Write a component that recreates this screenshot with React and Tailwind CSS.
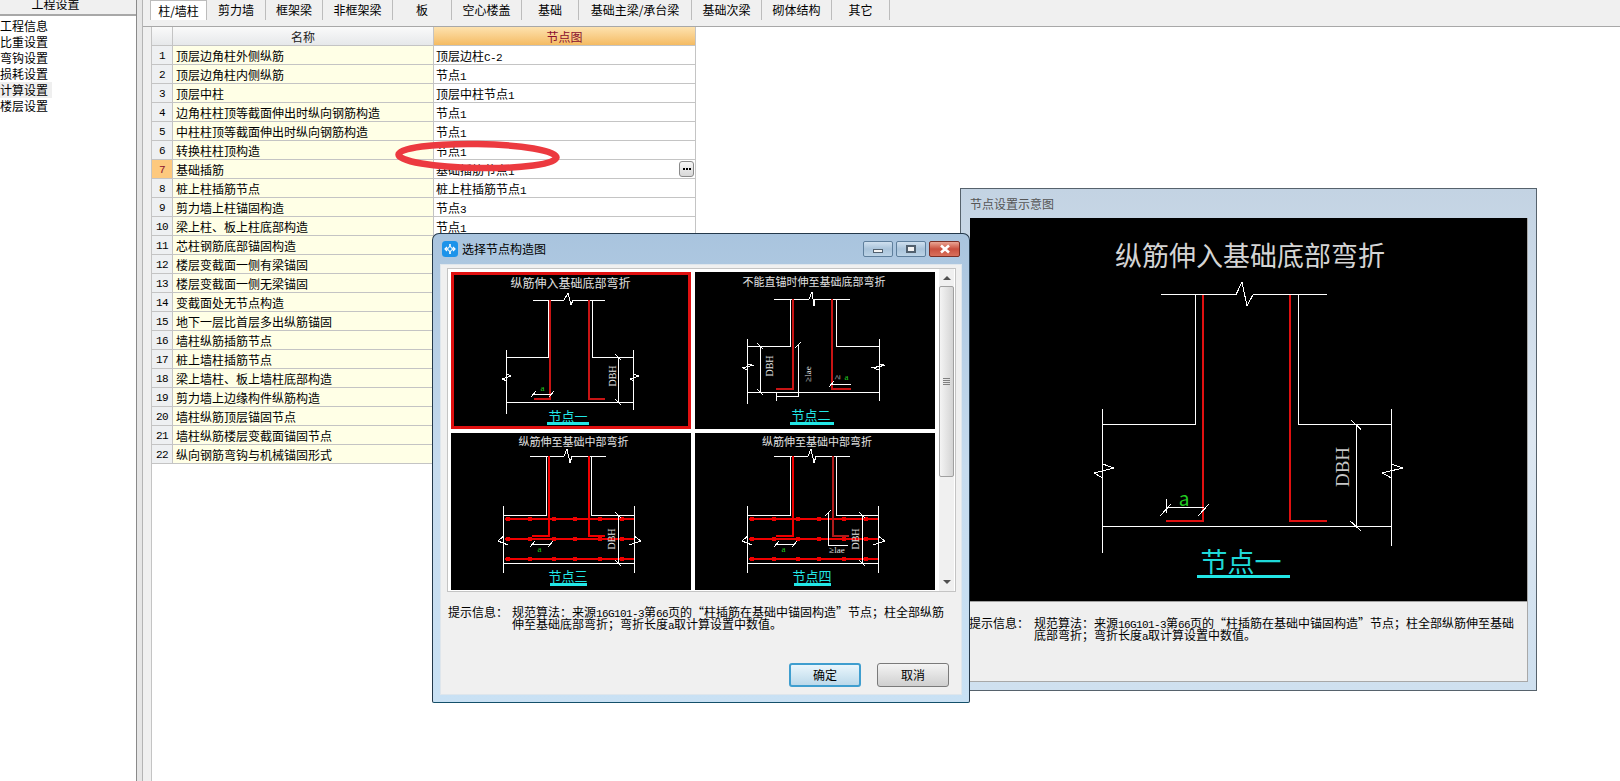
import React from 'react';

// ─── Table data ───────────────────────────────────────────────────────────────

const NAV = ['工程信息', '比重设置', '弯钩设置', '损耗设置', '计算设置', '楼层设置'];

const TABS = [
  ['柱/墙柱', 'w-[57px]'],
  ['剪力墙', 'w-[59px]'],
  ['框架梁', 'w-[57px]'],
  ['非框架梁', 'w-[70px]'],
  ['板', 'w-[59px]'],
  ['空心楼盖', 'w-[70px]'],
  ['基础', 'w-[57px]'],
  ['基础主梁/承台梁', 'w-[113px]'],
  ['基础次梁', 'w-[70px]'],
  ['砌体结构', 'w-[70px]'],
  ['其它', 'w-[58px]'],
];

const ROWS = [
  ['顶层边角柱外侧纵筋', '顶层边柱', 'C-2'],
  ['顶层边角柱内侧纵筋', '节点', '1'],
  ['顶层中柱', '顶层中柱节点', '1'],
  ['边角柱柱顶等截面伸出时纵向钢筋构造', '节点', '1'],
  ['中柱柱顶等截面伸出时纵向钢筋构造', '节点', '1'],
  ['转换柱柱顶构造', '节点', '1'],
  ['基础插筋', '基础插筋节点', '1'],
  ['桩上柱插筋节点', '桩上柱插筋节点', '1'],
  ['剪力墙上柱锚固构造', '节点', '3'],
  ['梁上柱、板上柱底部构造', '节点', '1'],
  ['芯柱钢筋底部锚固构造'],
  ['楼层变截面一侧有梁锚固'],
  ['楼层变截面一侧无梁锚固'],
  ['变截面处无节点构造'],
  ['地下一层比首层多出纵筋锚固'],
  ['墙柱纵筋插筋节点'],
  ['桩上墙柱插筋节点'],
  ['梁上墙柱、板上墙柱底部构造'],
  ['剪力墙上边缘构件纵筋构造'],
  ['墙柱纵筋顶层锚固节点'],
  ['墙柱纵筋楼层变截面锚固节点'],
  ['纵向钢筋弯钩与机械锚固形式'],
];

const SELECTED_ROW = 7;

// ─── Small helpers ────────────────────────────────────────────────────────────

function Lat({ children }) {
  return <span className="font-['Liberation_Mono',monospace] text-[11px] tracking-[-0.6px]">{children}</span>;
}

function L({ p, c = '#fff', w = 1 }) {
  return <polyline points={p} fill="none" stroke={c} strokeWidth={w} />;
}

function T({ x, y, size, children, c = '#e0e0e0', rotate, serif }) {
  return (
    <text
      x={x}
      y={y}
      fontSize={size}
      fill={c}
      textAnchor="middle"
      dominantBaseline="central"
      fontFamily={serif ? 'Liberation Serif, serif' : 'Noto Sans CJK SC, sans-serif'}
      transform={rotate ? `rotate(-90 ${x} ${y})` : undefined}
    >
      {children}
    </text>
  );
}

// ─── Node drawings ────────────────────────────────────────────────────────────

const THUMB_SVG = 'block w-[240px] h-[157px] bg-black';
const RED = '#c81414';
const CYAN = '#22e6e6';
const GREEN = '#22cc22';

function Thumb1() {
  return (
    <div className="border-[3px] border-[#e01010] w-[240px] h-[157px] bg-black">
      <svg viewBox="3 3 234 151" className="block w-[234px] h-[151px]" shapeRendering="crispEdges">
        <T x={119.5} y={10} size={12}>纵筋伸入基础底部弯折</T>
        <L p="81.6,28 113,28 117,21 120,33 122,28 154,28" />
        <L p="97,28 97,85 55.8,85" />
        <L p="55.8,78 55.8,142" />
        <L p="141.5,28 141.5,85 182.5,85" />
        <L p="182.5,78 182.5,138" />
        <L p="55.8,130 182.5,130" />
        <L p="99,28 99,127 82.6,127" c={RED} w={2} />
        <L p="137.8,28 137.8,127 154,127" c={RED} w={2} />
        <L p="167,85 167,130" />
        <L p="164,82 170,88" />
        <L p="164,127 170,133" />
        <T x={161} y={104} size={10} rotate serif>DBH</T>
        <T x={91.6} y={116} size={9} c={GREEN} serif>a</T>
        <L p="82.6,122 100,122" />
        <L p="80,125 85,119" />
        <L p="98,125 103,119" />
        <L p="55.8,102 59.6,104 51,107 55.8,109" />
        <L p="182.5,102 188,104 179,107 182.5,109" />
        <T x={117} y={143} size={13} c={CYAN}>节点一</T>
        <L p="96,151.5 138,151.5" c={CYAN} w={3} />
      </svg>
    </div>
  );
}

function Thumb2() {
  return (
    <svg viewBox="0 0 240 157" className={THUMB_SVG} shapeRendering="crispEdges">
      <T x={119} y={9} size={11}>不能直锚时伸至基础底部弯折</T>
      <L p="79,27 114,27 117,20 119,34 120,27 154.6,27" />
      <L p="95.4,27 95.4,74 52,74" />
      <L p="52,66.7 52,131.7" />
      <L p="141,27 141,74 184,74" />
      <L p="184,66.7 184,129" />
      <L p="52,120 184,120" />
      <L p="97.8,27 97.8,117 81,117" c={RED} w={2} />
      <L p="137.4,27 137.4,117 155.6,117" c={RED} w={2} />
      <L p="65,74 65,120" />
      <L p="62,71 68,77" />
      <L p="62,117 68,123" />
      <T x={74} y={94} size={10} rotate serif>DBH</T>
      <L p="103,73 103,124 81,124" />
      <L p="100,76 106,70" />
      <L p="81,120 81,129" />
      <T x={112.5} y={102} size={9} rotate serif>≥lae</T>
      <L p="136.7,112 156.3,112" />
      <L p="134,115 139,109" />
      <T x={142} y={105} size={9} rotate serif>≥</T>
      <T x={151.5} y={105} size={9} c={GREEN} serif>a</T>
      <L p="52,91.7 57.5,93.3 48,95.7 52,98" />
      <L p="184,91.7 190,93.3 178,95.7 184,98" />
      <T x={116} y={142} size={13} c={CYAN}>节点二</T>
      <L p="95.4,151.5 139,151.5" c={CYAN} w={3} />
    </svg>
  );
}

// The two mid-footing variants share the mat and differ in the right hook
function MidThumb({ title, titleX, left, right, dark, children }) {
  const dots = [57, 79, 103, 124, 149, 171];
  return (
    <svg viewBox="0 0 240 157" className={THUMB_SVG} shapeRendering="crispEdges">
      <T x={titleX} y={8} size={11}>{title}</T>
      <L p="79,23 113,23 116,16 119,30 121,23 154.6,23" />
      <L p={`${left},23 ${left},82 52.7,82`} />
      <L p="52.7,73 52.7,140" />
      <L p={`${right},23 ${right},82 183,82`} />
      <L p="183,73 183,140" />
      <L p="52.7,130 183,130" />
      {[86, 106, 126].map(y => (
        <g key={y}>
          <L p={`54,${y} 183,${y}`} c="#f00000" w={2} />
          {dots.map(x => <rect key={x} x={x - 2} y={y - 2} width={4} height={4} fill="#f00000" />)}
        </g>
      ))}
      <L p="98,23 98,103 81,103" c="#f00000" w={2} />
      <L p="137.5,23 137.5,103 153.5,103" c={dark ? '#b01c1c' : '#f00000'} w={2} />
      <L p="167,82 167,130" />
      <L p="164,79 170,85" />
      <L p="164,127 170,133" />
      <T x={160} y={106} size={10} rotate serif>DBH</T>
      <L p="81,111 99,111" />
      <L p="79,114 84,108" />
      <L p="97,114 102,108" />
      <T x={88.5} y={116} size={9} c={GREEN} serif>a</T>
      <L p="52.7,103 47,108 57,112" />
      <L p="183,103 190,108 178,112" />
      {children}
    </svg>
  );
}

function Thumb3() {
  return (
    <MidThumb title="纵筋伸至基础中部弯折" titleX={122.6} left={95} right={140.5}>
      <T x={117} y={142.5} size={13} c={CYAN}>节点三</T>
      <L p="98.5,151.5 136,151.5" c={CYAN} w={3} />
    </MidThumb>
  );
}

function Thumb4() {
  return (
    <MidThumb title="纵筋伸至基础中部弯折" titleX={122} left={95.4} right={141} dark>
      <L p="133,80 133,112 153,112" />
      <L p="130,83 136,77" />
      <T x={142} y={117} size={9} serif>≥lae</T>
      <T x={117} y={142.5} size={13} c={CYAN}>节点四</T>
      <L p="98.5,151.5 136,151.5" c={CYAN} w={3} />
    </MidThumb>
  );
}

function LargeDrawing() {
  return (
    <svg viewBox="0 0 557 383" className="block w-[557px] h-[383px] bg-black" shapeRendering="crispEdges">
      <T x={280} y={36} size={27} c="#d4d4d4">纵筋伸入基础底部弯折</T>
      <L p="191,76.7 266,76.7 272,64 277,88 283,76.7 357,76.7" />
      <L p="225.6,76.7 225.6,206.7 132.7,206.7" />
      <L p="132.7,190.7 132.7,335" />
      <L p="328.5,76.7 328.5,206.7 421.4,206.7" />
      <L p="421.4,190.7 421.4,328" />
      <L p="132.7,308.7 421.4,308.7" />
      <L p="233.3,76.7 233.3,303 196,303" c="#e01010" w={2} />
      <L p="320,76.7 320,303 357,303" c="#e01010" w={2} />
      <L p="386,206.7 386,308.7" />
      <L p="380.5,201.7 391,211.3" />
      <L p="380.5,303.3 391,313" />
      <T x={372.5} y={249} size={19} c="#c8c8c8" rotate serif>DBH</T>
      <T x={214} y={279} size={19} c={GREEN}>a</T>
      <L p="196,289 234,289" />
      <L p="196,280.6 196,294.6" />
      <L p="190,298 201,286" />
      <L p="228,298 239,286" />
      <L p="132.7,246 144,250 124,255 132.7,260" />
      <L p="421.4,246 432.9,250 412,255 421.4,260" />
      <T x={271} y={342} size={27} c="#1fd8d8">节点一</T>
      <L p="227,358.7 320,358.7" c={CYAN} w={3} />
    </svg>
  );
}

// ─── Window chrome ────────────────────────────────────────────────────────────

function CaptionButtons() {
  return (
    <div className="flex gap-[3px]">
      <div className="w-[30px] h-[16px] rounded-[2px] border border-[#5f7f9c] bg-gradient-to-b from-[#cfe0ef] via-[#a9c3da] to-[#bcd3e6] flex items-center justify-center">
        <div className="mt-[4px] w-[10px] h-[4px] bg-[#f4f4f4] border border-[#51606e]" />
      </div>
      <div className="w-[30px] h-[16px] rounded-[2px] border border-[#5f7f9c] bg-gradient-to-b from-[#cfe0ef] via-[#a9c3da] to-[#bcd3e6] flex items-center justify-center">
        <div className="w-[10px] h-[8px] bg-[#f4f4f4] border-2 border-[#51606e]" />
      </div>
      <div className="w-[31px] h-[16px] rounded-[2px] border border-[#7a2f26] bg-gradient-to-b from-[#e9a595] via-[#c9503f] to-[#d9705c] flex items-center justify-center">
        <svg viewBox="0 0 12 10" className="w-[12px] h-[10px]">
          <path d="M2 1.5 L10 8.5 M10 1.5 L2 8.5" stroke="#fff" strokeWidth="2.6" />
        </svg>
      </div>
    </div>
  );
}

function AppIcon() {
  return (
    <svg viewBox="0 0 16 16" className="w-[16px] h-[16px]">
      <rect width="16" height="16" rx="3.5" fill="#1c93ea" />
      <path d="M8 3 V13 M3.5 8 H12.5" stroke="#fff" strokeWidth="1.6" />
      <path d="M5 6 L3 8 L5 10 M11 6 L13 8 L11 10" stroke="#fff" strokeWidth="1.2" fill="none" />
      <circle cx="8" cy="8" r="2.2" fill="#1c93ea" stroke="#fff" strokeWidth="1" />
    </svg>
  );
}

function ScrollBar() {
  return (
    <div className="w-[15px] h-full flex flex-col items-center bg-[#f0f0f0]">
      <div className="mt-[7px] mb-[6px] w-0 h-0 border-x-[4px] border-x-transparent border-b-[4px] border-b-[#505050]" />
      <div className="w-[15px] h-[191px] rounded-[2px] border border-[#a0a0a0] bg-gradient-to-r from-[#f4f4f4] to-[#d4d4d4] flex flex-col items-center justify-center gap-[1px]">
        <div className="w-[7px] h-px bg-[#808080]" />
        <div className="w-[7px] h-px bg-[#808080]" />
        <div className="w-[7px] h-px bg-[#808080]" />
        <div className="w-[7px] h-px bg-[#808080]" />
      </div>
      <div className="mt-auto mb-[7px] w-0 h-0 border-x-[4px] border-x-transparent border-t-[4px] border-t-[#505050]" />
    </div>
  );
}

function HintText({ first, second, labelGap }) {
  return (
    <div className="flex text-[12px] leading-[12px] text-black">
      <div className={labelGap}>提示信息：</div>
      <div>
        <div className="h-[12px] whitespace-nowrap">{first}</div>
        <div className="h-[12px] whitespace-nowrap">{second}</div>
      </div>
    </div>
  );
}

function PickerDialog() {
  return (
    <div className="absolute left-[432px] top-[233px] w-[538px] h-[470px] rounded-t-[7px] rounded-b-[2px] border border-[#23384a] border-b-[#14506a] bg-gradient-to-b from-[#a9c4de] via-[#c6dbee] to-[#c9e1f4] px-[7px] flex flex-col">
      <div className="h-[30px] shrink-0 flex items-center pl-[2px] pr-[2px]">
        <AppIcon />
        <span className="ml-[4px] text-[12px] text-black">选择节点构造图</span>
        <div className="ml-auto"><CaptionButtons /></div>
      </div>
      <div className="h-[431px] bg-[#f0f0f0] border border-[#dfe6ec] px-[6px] pt-[3px] flex flex-col">
        <div className="w-[509px] h-[324px] shrink-0 bg-white border border-[#c4c4c4] flex">
          <div className="pl-[3px] pt-[3px] w-[491px] grid grid-cols-[240px_240px] gap-x-[4px] gap-y-[4px] content-start">
            <Thumb1 />
            <Thumb2 />
            <Thumb3 />
            <Thumb4 />
          </div>
          <ScrollBar />
        </div>
        <div className="mt-[14px] ml-[1px]">
          <HintText
            labelGap="w-[64px] shrink-0"
            first={<>规范算法：来源<Lat>16G101-3</Lat>第<Lat>66</Lat>页的“柱插筋在基础中锚固构造”节点；柱全部纵筋</>}
            second={<>伸至基础底部弯折；弯折长度<Lat>a</Lat>取计算设置中数值。</>}
          />
        </div>
        <div className="mt-auto mb-[7px] flex justify-end gap-[16px] pr-[6px]">
          <button className="w-[72px] h-[24px] rounded-[3px] border-2 border-[#3f9ecf] bg-gradient-to-b from-[#eaf6fc] to-[#bcd9ea] text-[12px] text-black">确定</button>
          <button className="w-[72px] h-[24px] rounded-[3px] border border-[#7a7a7a] bg-gradient-to-b from-[#f4f4f4] to-[#cfcfcf] text-[12px] text-black">取消</button>
        </div>
      </div>
    </div>
  );
}

function PreviewDialog() {
  return (
    <div className="absolute left-[960px] top-[188px] w-[577px] h-[503px] border border-[#56626c] bg-gradient-to-b from-[#c3d3e3] via-[#dde7f1] to-[#cfe0ef] flex flex-col pl-[9px] pr-[8px]">
      <div className="h-[29px] shrink-0 pt-[1px] flex items-center text-[12px] text-[#555555]">节点设置示意图</div>
      <div className="h-[464px] bg-[#efefef] border-b border-r border-[#a8a8a8] flex flex-col">
        <LargeDrawing />
        <div className="h-px bg-[#a0a0a0]" />
        <div className="mt-[15px] -ml-px">
          <HintText
            labelGap="w-[65px] shrink-0"
            first={<>规范算法：来源<Lat>16G101-3</Lat>第<Lat>66</Lat>页的“柱插筋在基础中锚固构造”节点；柱全部纵筋伸至基础</>}
            second={<>底部弯折；弯折长度<Lat>a</Lat>取计算设置中数值。</>}
          />
        </div>
      </div>
    </div>
  );
}

// ─── Page ─────────────────────────────────────────────────────────────────────

export default function App() {
  return (
    <div className="relative w-full h-[781px] overflow-hidden bg-white flex font-['Noto_Sans_CJK_SC',sans-serif] text-black">
      {/* Settings nav */}
      <aside className="w-[137px] shrink-0 border-r border-[#8a8a8a] flex flex-col">
        <div className="h-[16px] bg-[#f0f0f0] border-b-2 border-[#a8a8a8] overflow-hidden pr-[25px] text-center text-[12px] leading-[12px]">
          <div className="-mt-[2px]">工程设置</div>
        </div>
        <div className="pt-[2px] text-[12px]">
          {NAV.map(item => (
            <div key={item} className="h-[16px] leading-[16px]">
              <span className={item === '计算设置' ? 'inline-block w-[52px] bg-[#efefef]' : 'inline-block'}>{item}</span>
            </div>
          ))}
        </div>
      </aside>

      <div className="w-[6px] shrink-0 bg-[#e6e6e6] border-r border-[#b4b4b4]" />

      <main className="flex-1 flex flex-col min-w-0">
        {/* Tab strip */}
        <div className="h-[27px] shrink-0 bg-[#f0f0f0] border-b border-[#a8a8a8] flex pl-[7px]">
          {TABS.map(([label, width], i) => (
            <div
              key={label}
              className={`${width} h-[20px] shrink-0 flex items-center justify-center text-[12px] whitespace-nowrap border-r border-[#bcbcbc] ${i === 0 ? 'bg-white border-t border-l border-[#a8a8a8]' : ''}`}
            >
              {label}
            </div>
          ))}
        </div>

        <div className="flex-1 flex min-h-0">
          <div className="w-[9px] shrink-0 bg-[#f0f0f0] border-r border-[#c4c4c4]" />

          {/* Node settings grid */}
          <div className="w-[544px] text-[12px]">
            <div className="flex h-[19px]">
              <div className="w-[21px] bg-gradient-to-b from-[#fafafa] to-[#e6e8ea] border-r border-b border-[#c4c4c4]" />
              <div className="w-[261px] pt-[1px] bg-gradient-to-b from-[#fafafa] to-[#e6e8ea] border-r border-b border-[#c4c4c4] flex items-center justify-center leading-none text-[#222222]">名称</div>
              <div className="w-[262px] pt-[1px] bg-gradient-to-b from-[#fde2ae] to-[#f4bb62] border-r border-b border-[#c4c4c4] flex items-center justify-center leading-none text-[#8a0f2e]">节点图</div>
            </div>
            {ROWS.map(([name, node, suffix], i) => {
              const num = i + 1;
              const selected = num === SELECTED_ROW;
              return (
                <div key={name} className="flex h-[19px] leading-[20px]">
                  <div className={`w-[21px] h-[19px] overflow-hidden text-center font-['Liberation_Mono',monospace] text-[11px] tracking-[-0.6px] border-r border-b border-[#c4c4c4] ${selected ? 'bg-[#fdc97e] text-[#8a0f2e]' : 'bg-[#eef0f2]'}`}>{num}</div>
                  <div className="w-[261px] h-[19px] pl-[3px] bg-[#ffffe6] border-r border-b border-[#c4c4c4] whitespace-nowrap overflow-hidden">{name}</div>
                  <div className="relative w-[262px] h-[19px] pl-[2px] bg-white border-r border-b border-[#c4c4c4] whitespace-nowrap">
                    {node}{suffix && <Lat>{suffix}</Lat>}
                    {selected && (
                      <div className="absolute right-[1px] top-[1px] w-[15px] h-[16px] rounded-[3px] border border-[#8a8a8a] bg-gradient-to-b from-[#f6f6f6] to-[#d8d8d8] flex items-center justify-center gap-[1px]">
                        <div className="w-[2px] h-[2px] bg-black" />
                        <div className="w-[2px] h-[2px] bg-black" />
                        <div className="w-[2px] h-[2px] bg-black" />
                      </div>
                    )}
                  </div>
                </div>
              );
            })}
          </div>
        </div>
      </main>

      {/* Hand-drawn annotation over rows 6 and 7 */}
      <svg viewBox="0 0 175 40" className="absolute left-[390px] top-[136px] w-[175px] h-[40px]">
        <ellipse cx="87.5" cy="20" rx="79" ry="12" fill="none" stroke="#ec3a40" strokeWidth="6.5" transform="rotate(1 87.5 20)" />
      </svg>

      <PreviewDialog />
      <PickerDialog />
    </div>
  );
}
